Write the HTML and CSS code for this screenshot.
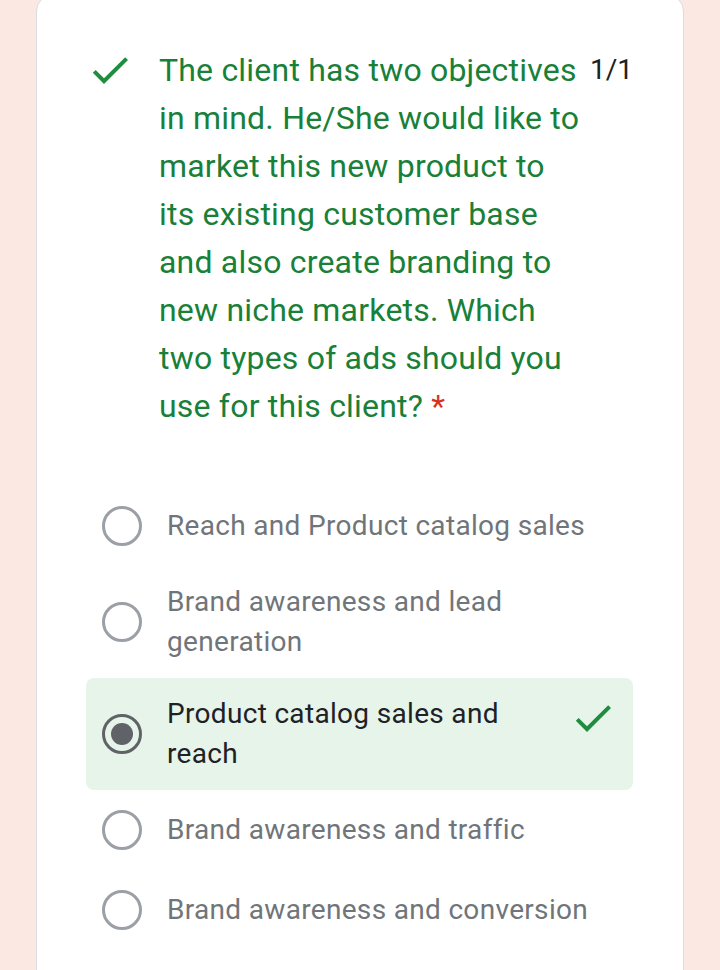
FILE: index.html
```html
<!DOCTYPE html>
<html>
<head>
<meta charset="utf-8">
<link rel="stylesheet" href="styles.css">
</head>
<body>
<div class="card">
  <div class="header">
    <svg class="hcheck" viewBox="0 0 24 24" width="48" height="48"><path fill="#1e8e3e" d="M9 16.17L4.83 12l-1.42 1.41L9 19 21 7l-1.41-1.41z"/></svg>
    <div class="title">The client has two objectives in mind. He/She would like to market this new product to its existing customer base and also create branding to new niche markets. Which two types of ads should you use for this client? <span class="req">*</span></div>
    <div class="points">1/1</div>
  </div>
  <div class="options">
    <div class="opt"><span class="radio"></span><span class="label">Reach and Product catalog sales</span></div>
    <div class="opt"><span class="radio"></span><span class="label">Brand awareness and lead generation</span></div>
    <div class="opt selected"><span class="radio on"></span><span class="label">Product catalog sales and reach</span>
      <svg class="ocheck" viewBox="0 0 24 24" width="48" height="48"><path fill="#1e8e3e" d="M9 16.17L4.83 12l-1.42 1.41L9 19 21 7l-1.41-1.41z"/></svg>
    </div>
    <div class="opt"><span class="radio"></span><span class="label">Brand awareness and traffic</span></div>
    <div class="opt"><span class="radio"></span><span class="label">Brand awareness and conversion</span></div>
  </div>
</div>
</body>
</html>
```
FILE: styles.css
```css
html, body {
  margin: 0;
  padding: 0;
  background: #fce8e2;
  font-family: Roboto, "Noto Sans", sans-serif;
}
.card {
  box-sizing: border-box;
  width: 648px;
  margin: -5px 0 0 36px;
  background: #fff;
  border: 1px solid #dadce0;
  border-radius: 16px;
  padding: 50px 50px 60px 49px;
  min-height: 1000px;
}
.header {
  display: flex;
  align-items: flex-start;
}
.hcheck {
  flex: none;
  margin-top: 0;
  margin-right: 25px;
}
.title {
  flex: 1;
  font-size: 32px;
  line-height: 48px;
  letter-spacing: 0.2px;
  color: #188038;
}
.req {
  color: #d93025;
}
.points {
  flex: none;
  margin-left: 4px;
  font-size: 28px;
  line-height: 48px;
  color: #202124;
}
.options {
  margin-top: 56px;
}
.opt {
  display: flex;
  align-items: center;
  min-height: 80px;
  box-sizing: border-box;
  padding: 16px;
  border-radius: 8px;
}
.radio {
  flex: none;
  box-sizing: border-box;
  width: 40px;
  height: 40px;
  border: 3.5px solid #9aa0a6;
  border-radius: 50%;
  margin-right: 25px;
  display: flex;
  align-items: center;
  justify-content: center;
}
.radio.on {
  border-color: #5f6368;
}
.radio.on::after {
  content: "";
  width: 22px;
  height: 22px;
  border-radius: 50%;
  background: #5f6368;
}
.label {
  flex: 1;
  font-size: 28px;
  line-height: 40px;
  letter-spacing: 0.32px;
  color: #70757a;
}
.selected {
  background: #e6f4ea;
}
.selected .label {
  color: #202124;
}
.ocheck {
  flex: none;
  align-self: flex-start;
  margin-left: 8px;
}
```
